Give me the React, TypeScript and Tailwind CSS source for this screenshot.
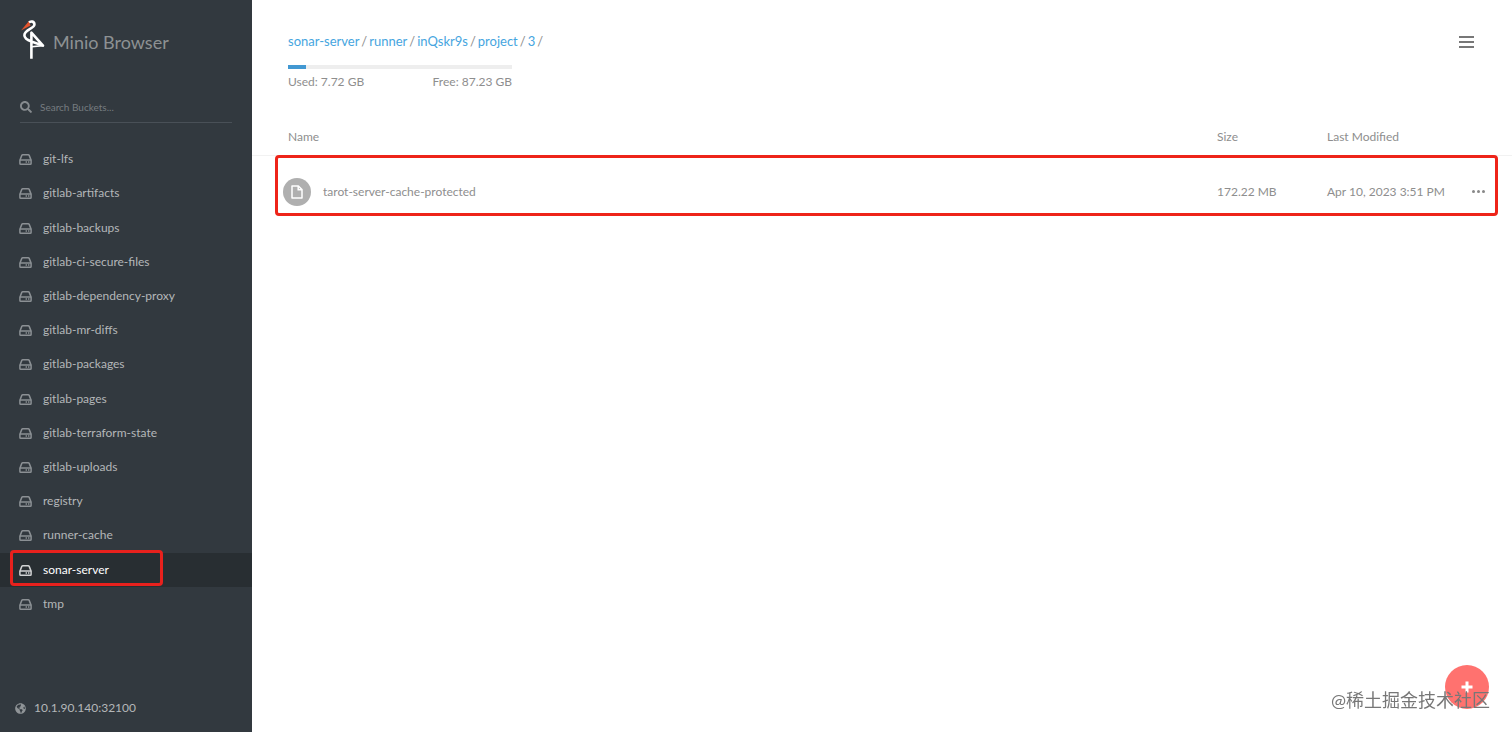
import { FaGlobeAmericas, FaSearch } from "react-icons/fa";

const buckets = [
  "git-lfs",
  "gitlab-artifacts",
  "gitlab-backups",
  "gitlab-ci-secure-files",
  "gitlab-dependency-proxy",
  "gitlab-mr-diffs",
  "gitlab-packages",
  "gitlab-pages",
  "gitlab-terraform-state",
  "gitlab-uploads",
  "registry",
  "runner-cache",
  "sonar-server",
  "tmp",
];

const activeBucket = "sonar-server";
const path = ["sonar-server", "runner", "inQskr9s", "project", "3"];

function Logo() {
  return (
    <svg className="h-10 w-6" viewBox="0 0 24 40" fill="none">
      <path
        d="M7.8 2.8C9.6 0.6 13.6 1.2 13.4 4.8C13.2 8.6 3.4 9.6 3.4 15.2C3.4 18.6 7 20.2 10.4 21.4L22 25.6L10.4 12.6V38.8"
        stroke="#fff"
        strokeWidth="2.6"
        strokeLinejoin="round"
      />
      <path d="M10.6 26.8 22 25.6" stroke="#fff" strokeWidth="1.6" />
      <path d="M7.6 1.6 0 10.4 9.6 5.4Z" fill="#e2542d" />
    </svg>
  );
}

function DriveIcon() {
  return (
    <svg className="mt-px h-[13px] w-[13px] shrink-0" viewBox="0 0 13 13" fill="none" stroke="currentColor" strokeWidth="1.5">
      <path d="M0.9 7.2 2.8 2.4Q3 1.8 3.8 1.8H9.2Q10 1.8 10.2 2.4L12.1 7.2V10.4Q12.1 11.2 11.3 11.2H1.7Q0.9 11.2 0.9 10.4Z" />
      <path d="M0.9 7H12.1" />
      <path d="M6.6 9.1H8M9 9.1H10.4" />
    </svg>
  );
}

function FileIcon() {
  return (
    <svg className="h-[14px] w-3" viewBox="0 0 12 14" fill="none" stroke="#fff" strokeWidth="1.5">
      <path d="M1 1H7.4L11 4.6V13H1Z" strokeLinejoin="round" />
      <path d="M7.2 1V4.8H11" />
    </svg>
  );
}

function Sidebar() {
  return (
    <aside className="flex w-[252px] shrink-0 flex-col bg-[#32393f]">
      <div className="flex items-center gap-2 pt-5 pl-[21px]">
        <Logo />
        <h1 className="pt-1 text-[18px] leading-6 text-[#8d9193]">Minio Browser</h1>
      </div>

      <label className="mx-5 mt-8 flex h-[31px] items-center gap-2 border-b border-[#495057] text-[#868b8f]">
        <FaSearch className="h-3 w-3 shrink-0" />
        <input
          type="text"
          aria-label="Search Buckets"
          placeholder="Search Buckets..."
          className="w-full bg-transparent text-[10px] outline-none placeholder:text-[#767c80]"
        />
      </label>

      <nav className="mt-[19px]">
        <ul className="grid h-[479px] auto-rows-fr">
          {buckets.map((bucket) => (
            <li key={bucket} className="relative">
              <a
                href="#"
                className={
                  bucket === activeBucket
                    ? "flex h-full items-center gap-[11px] bg-[#282e32] pl-[19px] text-white"
                    : "flex h-full items-center gap-[11px] pl-[19px] text-[#b4b7b9]"
                }
              >
                <span className={bucket === activeBucket ? "text-[#d0d2d3]" : "text-[#8b9094]"}>
                  <DriveIcon />
                </span>
                {bucket}
              </a>
              {bucket === activeBucket && (
                <span className="pointer-events-none absolute -top-[3px] left-[10px] h-9 w-[153px] rounded-sm border-3 border-[#e8211d]" />
              )}
            </li>
          ))}
        </ul>
      </nav>

      <div className="mt-auto flex items-center gap-2 pb-[15px] pl-[15px] text-[#b4b7b9]">
        <FaGlobeAmericas className="h-[11px] w-[11px] text-[#8f9497]" />
        10.1.90.140:32100
      </div>
    </aside>
  );
}

function Header() {
  return (
    <header className="flex items-start justify-between pt-8 pr-[38px] pl-9">
      <div>
        <nav className="flex gap-0.5 text-[13px]">
          {path.map((part) => (
            <span key={part} className="flex gap-0.5">
              <a href="#" className="text-[#46a5e0]">
                {part}
              </a>
              <span>/</span>
            </span>
          ))}
        </nav>
        <div className="mt-[15px] h-1 w-[224px] bg-[#eeeeee]">
          <div className="h-full bg-[#4298d2]" style={{ width: `${(7.72 / (7.72 + 87.23)) * 100}%` }} />
        </div>
        <div className="mt-1 flex w-[224px] justify-between">
          <span>Used: 7.72 GB</span>
          <span>Free: 87.23 GB</span>
        </div>
      </div>
      <button type="button" aria-label="Menu" className="mt-1 flex flex-col gap-[3px]">
        <span className="h-[2px] w-[15px] bg-[#777777]" />
        <span className="h-[2px] w-[15px] bg-[#777777]" />
        <span className="h-[2px] w-[15px] bg-[#777777]" />
      </button>
    </header>
  );
}

function Files() {
  return (
    <div className="relative mt-7">
      <table className="w-full table-fixed text-left">
        <thead>
          <tr className="h-9 border-b border-[#f2f2f2]">
            <th className="pl-9 font-normal">Name</th>
            <th className="w-[110px] font-normal">Size</th>
            <th className="w-[145px] font-normal">Last Modified</th>
            <th className="w-10" />
          </tr>
        </thead>
        <tbody>
          <tr className="h-[73px]">
            <td className="pl-[31px]">
              <div className="flex items-center gap-3">
                <span className="flex h-7 w-7 items-center justify-center rounded-full bg-[#afafaf]">
                  <FileIcon />
                </span>
                tarot-server-cache-protected
              </div>
            </td>
            <td>172.22 MB</td>
            <td>Apr 10, 2023 3:51 PM</td>
            <td>
              <button type="button" aria-label="More actions" className="flex gap-[2px] align-middle">
                <span className="h-[3px] w-[3px] rounded-full bg-[#888888]" />
                <span className="h-[3px] w-[3px] rounded-full bg-[#888888]" />
                <span className="h-[3px] w-[3px] rounded-full bg-[#888888]" />
              </button>
            </td>
          </tr>
        </tbody>
      </table>
      <div className="pointer-events-none absolute top-9 right-[14px] left-[23px] h-[61px] rounded-sm border-3 border-[#ee2419]" />
    </div>
  );
}

export default function App() {
  return (
    <div className="flex min-h-screen bg-white font-['Lato','Noto_Sans_CJK_SC',sans-serif] text-[12px] leading-[18px] text-[#8e8e8e]">
      <Sidebar />
      <main className="min-w-0 flex-1">
        <Header />
        <Files />
      </main>
      <button
        type="button"
        aria-label="Add"
        className="fixed right-[23px] bottom-[23px] flex h-11 w-11 items-center justify-center rounded-full bg-[#ff726f] text-white"
      >
        <svg className="h-3 w-3" viewBox="0 0 12 12" stroke="currentColor" strokeWidth="3">
          <path d="M6 0.5V11.5M0.5 6H11.5" />
        </svg>
      </button>
      <span className="pointer-events-none fixed right-[22px] bottom-5 text-[18px] leading-6 text-[#777777]">
        @稀土掘金技术社区
      </span>
    </div>
  );
}
